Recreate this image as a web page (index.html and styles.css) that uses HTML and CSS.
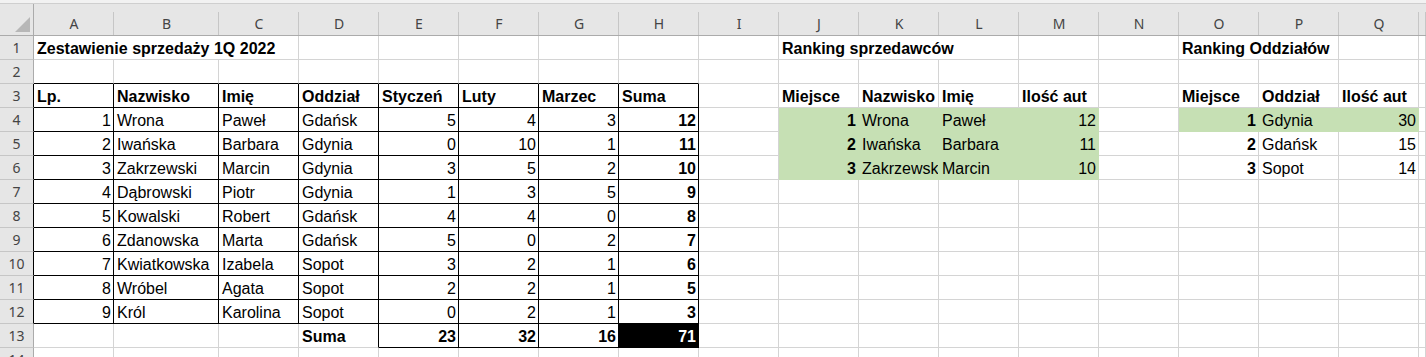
FILE: index.html
```html
<!DOCTYPE html>
<html lang="pl">
<head>
  <meta charset="UTF-8" />
  <meta name="viewport" content="width=device-width, initial-scale=1.0" />
  <title>Zestawienie sprzedaży 1Q 2022</title>
  <link rel="stylesheet" href="styles.css">
</head>
<body>
  <div class="edge"></div>
  <div class="sheet" id="sheet"></div>

  <script>
    const cols = "ABCDEFGHIJKLMNOPQR".split("");
    const rowCount = 14;
    const cells = {};

    function put(ref, text, cls = "", span = 1) {
      cells[ref] = { text, cls, span };
    }

    // main table
    put("A1", "Zestawienie sprzedaży 1Q 2022", "b", 3);
    ["Lp.", "Nazwisko", "Imię", "Oddział", "Styczeń", "Luty", "Marzec", "Suma"]
      .forEach((t, i) => {
        put(cols[i] + "2", "", "edge-b");
        put(cols[i] + "3", t, "b frame");
      });

    const sales = [
      [1, "Wrona", "Paweł", "Gdańsk", 5, 4, 3],
      [2, "Iwańska", "Barbara", "Gdynia", 0, 10, 1],
      [3, "Zakrzewski", "Marcin", "Gdynia", 3, 5, 2],
      [4, "Dąbrowski", "Piotr", "Gdynia", 1, 3, 5],
      [5, "Kowalski", "Robert", "Gdańsk", 4, 4, 0],
      [6, "Zdanowska", "Marta", "Gdańsk", 5, 0, 2],
      [7, "Kwiatkowska", "Izabela", "Sopot", 3, 2, 1],
      [8, "Wróbel", "Agata", "Sopot", 2, 2, 1],
      [9, "Król", "Karolina", "Sopot", 0, 2, 1]
    ];
    const totals = [0, 0, 0, 0];

    sales.forEach((r, i) => {
      const row = i + 4;
      const sum = r[4] + r[5] + r[6];
      put("A" + row, r[0], "n frame");
      put("B" + row, r[1], "frame");
      put("C" + row, r[2], "frame");
      put("D" + row, r[3], "frame");
      put("E" + row, r[4], "n frame");
      put("F" + row, r[5], "n frame");
      put("G" + row, r[6], "n frame");
      put("H" + row, sum, "n b frame");
      totals[0] += r[4]; totals[1] += r[5]; totals[2] += r[6]; totals[3] += sum;
    });

    put("D13", "Suma", "b edge-r");
    put("E13", totals[0], "n b frame");
    put("F13", totals[1], "n b frame");
    put("G13", totals[2], "n b frame");
    put("H13", totals[3], "n b frame total");

    // ranking of sellers
    put("J1", "Ranking sprzedawców", "b", 3);
    put("J3", "Miejsce", "b");
    put("K3", "Nazwisko", "b");
    put("L3", "Imię", "b");
    put("M3", "Ilość aut", "b");
    [["Wrona", "Paweł", 12], ["Iwańska", "Barbara", 11], ["Zakrzewski", "Marcin", 10]]
      .forEach((r, i) => {
        const row = i + 4;
        put("J" + row, i + 1, "n b green");
        put("K" + row, r[0], "green");
        put("L" + row, r[1], "green");
        put("M" + row, r[2], "n green");
      });

    // ranking of branches
    put("O1", "Ranking Oddziałów", "b", 2);
    put("O3", "Miejsce", "b");
    put("P3", "Oddział", "b");
    put("Q3", "Ilość aut", "b");
    [["Gdynia", 30], ["Gdańsk", 15], ["Sopot", 14]].forEach((r, i) => {
      const row = i + 4;
      const fill = i === 0 ? " green" : "";
      put("O" + row, i + 1, "n b" + fill);
      put("P" + row, r[0], fill.trim());
      put("Q" + row, r[1], "n" + fill);
    });

    const sheet = document.getElementById("sheet");

    function addCell(cls, text, span) {
      const el = document.createElement("div");
      el.className = cls;
      el.textContent = text;
      if (span > 1) el.style.gridColumn = "span " + span;
      sheet.appendChild(el);
    }

    // column headers
    const corner = document.createElement("div");
    corner.className = "corner";
    corner.innerHTML = '<svg width="15" height="15" viewBox="0 0 15 15"><path d="M15 0V15H0Z" fill="#b7b7b7"/></svg>';
    sheet.appendChild(corner);
    cols.forEach((c, i) => addCell("col-head", i < cols.length - 1 ? c : "", 1));

    // rows
    for (let r = 1; r <= rowCount; r++) {
      addCell("row-head" + (r >= 3 && r <= 12 ? " edge-r" : ""), r, 1);
      for (let c = 0; c < cols.length; c++) {
        const cell = cells[cols[c] + r];
        if (!cell) {
          addCell("cell", "", 1);
          continue;
        }
        addCell(("cell " + cell.cls).trim(), cell.text, cell.span);
        c += cell.span - 1;
      }
    }
  </script>
</body>
</html>
```

FILE: styles.css
```css
:root {
  --grid: #d4d4d4;
  --head: #e6e6e6;
  --head-line: #c6c6c6;
  --green: #c6e0b4;
}

* {
  box-sizing: border-box;
}

body {
  margin: 0;
  background: #fff;
  font-family: "Liberation Sans", Arial, sans-serif;
  overflow: hidden;
}

.edge {
  height: 4px;
  background: #f2f2f2;
  border-bottom: 1px solid #cfcfcf;
}

.sheet {
  display: grid;
  grid-template-columns: 34px 80px 105px repeat(15, 80px) 7px;
  grid-template-rows: 32px repeat(14, 24px);
}

.corner {
  background: var(--head);
  border-right: 1px solid #ababab;
  border-bottom: 1px solid #ababab;
  display: flex;
  align-items: flex-end;
  justify-content: flex-end;
  padding: 0 3px 3px 0;
}

.col-head,
.row-head {
  background: var(--head);
  color: #444;
  font-family: "Noto Sans", "Open Sans", sans-serif;
  font-size: 14px;
  text-align: center;
}

.col-head {
  padding-top: 8px;
  line-height: 23px;
  border-bottom: 1px solid #ababab;
  background: linear-gradient(var(--head-line), var(--head-line)) right bottom / 1px 23px no-repeat, var(--head);
}

.row-head {
  line-height: 24px;
  border-right: 1px solid #ababab;
  border-bottom: 1px solid var(--head-line);
}

.cell {
  padding: 2px 3px 0 3px;
  font-size: 16px;
  line-height: 22px;
  color: #000;
  white-space: nowrap;
  overflow: hidden;
  border-right: 1px solid var(--grid);
  border-bottom: 1px solid var(--grid);
}

.n {
  text-align: right;
  padding-right: 2px;
}

.b {
  font-weight: bold;
}

.frame {
  border-right-color: #000;
  border-bottom-color: #000;
}

.edge-b {
  border-bottom-color: #000;
}

.row-head.edge-r,
.edge-r {
  border-right-color: #000;
}

.green {
  background: var(--green);
  border-color: var(--green);
}

.total {
  background: #000;
  color: #fff;
}
```
